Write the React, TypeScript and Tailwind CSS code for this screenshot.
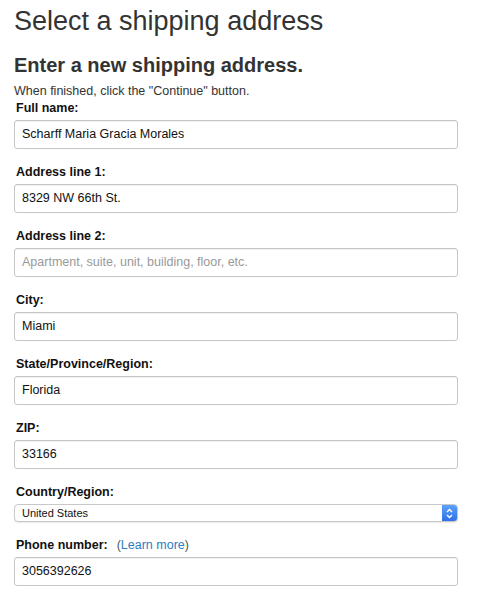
const fields = [
  { label: 'Full name:', value: 'Scharff Maria Gracia Morales' },
  { label: 'Address line 1:', value: '8329 NW 66th St.' },
  { label: 'Address line 2:', value: '', placeholder: 'Apartment, suite, unit, building, floor, etc.' },
  { label: 'City:', value: 'Miami' },
  { label: 'State/Province/Region:', value: 'Florida' },
  { label: 'ZIP:', value: '33166' },
]

const Field = ({ label, value, placeholder }: { label: React.ReactNode; value: string; placeholder?: string }) => (
  <div className="flex flex-col">
    <div className="h-[16px] pl-[2px] text-[12.5px] leading-[16px] font-bold text-[#111]">{label}</div>
    <div className="mt-[4px] flex h-[29px] items-center rounded-[3px] border border-[#c5c5c5] bg-white px-[7px] text-[12.5px] shadow-[inset_0_1px_0_rgba(0,0,0,0.05)]">
      {value ? <span className="text-[#111]">{value}</span> : <span className="text-[#999]">{placeholder}</span>}
    </div>
  </div>
)

export default function App() {
  return (
    <div className="min-h-[595px] bg-white pl-[14px] font-['Liberation_Sans',Arial,sans-serif] text-[#111]">
      <div className="w-[444px]">
        <h1 className="pt-[5px] text-[27px] leading-[32px] font-normal text-[#333]">Select a shipping address</h1>
        <h2 className="mt-[15px] text-[20px] leading-[26px] font-bold text-[#333]">Enter a new shipping address.</h2>
        <p className="mt-[6px] text-[12.5px] leading-[15px] text-[#333]">When finished, click the "Continue" button.</p>
        <div className="mt-[1px] flex flex-col gap-[15px]">
          {fields.map((f) => (
            <Field key={f.label} {...f} />
          ))}
          <div className="flex flex-col">
            <div className="h-[16px] pl-[2px] text-[12.5px] leading-[16px] font-bold text-[#111]">Country/Region:</div>
            <div className="mt-[4px] flex h-[18px] items-stretch overflow-hidden rounded-[4px] border border-[#c8c8c8] bg-white shadow-[0_1px_1px_rgba(0,0,0,0.08)]">
              <div className="flex flex-1 items-center pl-[7px] text-[11px] text-[#111]">United States</div>
              <div className="flex w-[15px] items-center justify-center bg-gradient-to-b from-[#5ea2fb] to-[#2f6fe8]">
                <svg width="7" height="11" viewBox="0 0 7 11" fill="none" stroke="white" strokeWidth="1.4">
                  <path d="M1 4 L3.5 1.5 L6 4" />
                  <path d="M1 7 L3.5 9.5 L6 7" />
                </svg>
              </div>
            </div>
          </div>
          <Field
            label={
              <span>
                Phone number:
                <span className="ml-[9px] font-normal text-[#555]">
                  (<span className="text-[#2a7fc1]">Learn more</span>)
                </span>
              </span>
            }
            value="3056392626"
          />
        </div>
      </div>
    </div>
  )
}
